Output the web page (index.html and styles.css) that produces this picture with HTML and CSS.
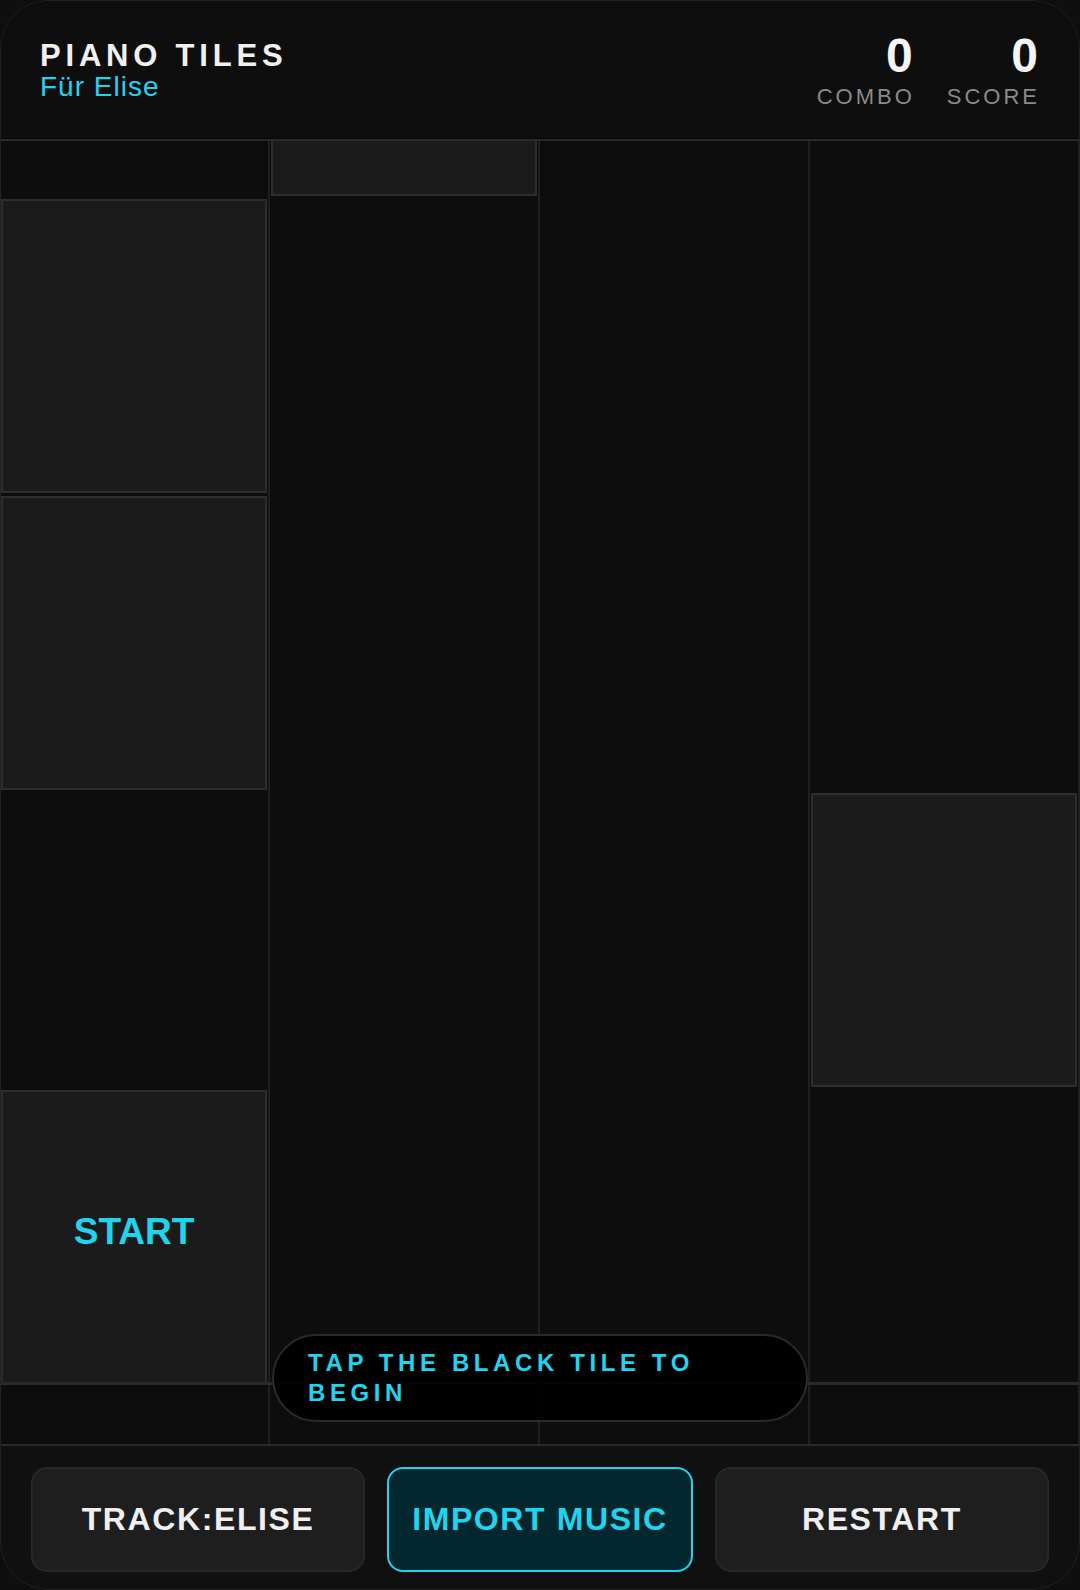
FILE: index.html
```html
<!DOCTYPE html>
<html lang="en">
<head>
<meta charset="utf-8">
<title>Piano Tiles</title>
<link rel="stylesheet" href="styles.css">
</head>
<body>
<div class="app">
  <header class="header">
    <div class="brand">
      <div class="title">PIANO TILES</div>
      <div class="subtitle">Für Elise</div>
    </div>
    <div class="stats">
      <div class="stat">
        <div class="stat-value">0</div>
        <div class="stat-label">COMBO</div>
      </div>
      <div class="stat">
        <div class="stat-value">0</div>
        <div class="stat-label">SCORE</div>
      </div>
    </div>
  </header>

  <main class="board">
    <div class="lane">
      <div class="tile row-3"></div>
      <div class="tile row-2"></div>
      <div class="tile row-0 start-tile"><span class="start-text">START</span></div>
    </div>
    <div class="lane">
      <div class="tile row-4"></div>
    </div>
    <div class="lane"></div>
    <div class="lane">
      <div class="tile row-1"></div>
    </div>
    <div class="hit-line"></div>
    <div class="hint">TAP THE BLACK TILE TO BEGIN</div>
  </main>

  <footer class="controls">
    <button class="btn">TRACK:ELISE</button>
    <button class="btn btn-accent">IMPORT MUSIC</button>
    <button class="btn">RESTART</button>
  </footer>
</div>
</body>
</html>
```

FILE: styles.css
```css
* {
  box-sizing: border-box;
}

html, body {
  margin: 0;
  padding: 0;
  background: #0f0f0f;
}

body {
  font-family: "Liberation Sans", Arial, sans-serif;
}

.app {
  position: relative;
  width: 1080px;
  height: 1590px;
  border-radius: 48px;
  overflow: hidden;
  background: #0e0e0e;
  display: flex;
  flex-direction: column;
}

.app::after {
  content: "";
  position: absolute;
  inset: 0;
  border: 1px solid #222222;
  border-radius: 48px;
  pointer-events: none;
}

/* Header */
.header {
  height: 139px;
  flex: none;
  padding: 2px 40px 0 40px;
  display: flex;
  align-items: center;
  justify-content: space-between;
  background: #0e0e0e;
  border-bottom: 1px solid #080808;
}

.brand {
  display: flex;
  flex-direction: column;
}

.title {
  font-size: 31px;
  line-height: 1;
  font-weight: 700;
  letter-spacing: 4.8px;
  color: #f0f0f0;
}

.subtitle {
  margin-top: 2px;
  font-size: 28px;
  line-height: 1;
  letter-spacing: 1px;
  color: #22d3ee;
}

.stats {
  display: flex;
  gap: 32px;
}

.stat {
  display: flex;
  flex-direction: column;
  align-items: flex-end;
}

.stat-value {
  margin-right: 2px;
  font-size: 48px;
  line-height: 1;
  font-weight: 700;
  color: #f5f5f5;
}

.stat-label {
  margin-top: 6px;
  font-size: 22px;
  line-height: 1;
  letter-spacing: 3px;
  color: #8a8a8a;
}

/* Board */
.board {
  position: relative;
  flex: none;
  height: 1307px;
  display: flex;
  overflow: hidden;
  background: #0d0d0d;
  border-top: 2px solid #2a2a2a;
  border-bottom: 2px solid #2a2a2a;
}

.lane {
  position: relative;
  width: 25%;
  height: 100%;
  border-right: 2px solid #1f1f1f;
}

.lane:last-of-type {
  border-right: none;
}

.tile {
  position: absolute;
  left: 1px;
  right: 1px;
  height: 294px;
  background: #1b1b1b;
  border: 2px solid #2d2d2d;
}

.row-0 { top: 949px; }
.row-1 { top: 652px; }
.row-2 { top: 355px; }
.row-3 { top: 58px; }
.row-4 { top: -239px; }

.start-tile {
  display: flex;
  align-items: center;
  justify-content: center;
  padding-bottom: 10px;
}

.start-text {
  font-size: 37px;
  font-weight: 700;
  color: #22d3ee;
}

.hit-line {
  position: absolute;
  left: 0;
  right: 0;
  top: 1241px;
  height: 3px;
  background: #2a2a2a;
}

.hint {
  position: absolute;
  left: 50%;
  bottom: 22px;
  width: 536px;
  transform: translateX(-50%);
  padding: 12px 34px;
  border: 2px solid #2a2a2a;
  border-radius: 44px;
  background: rgba(0, 0, 0, 0.93);
  color: #22d3ee;
  font-size: 24px;
  line-height: 30px;
  font-weight: 700;
  letter-spacing: 4.6px;
  text-align: left;
}

/* Footer */
.controls {
  flex: 1;
  display: grid;
  grid-template-columns: 1fr auto 1fr;
  gap: 22px;
  padding: 21px 31px 18px 31px;
  background: #101010;
}

.btn {
  margin: 0;
  height: 105px;
  padding: 0 23px;
  border: 2px solid #272727;
  border-radius: 16px;
  background: #1e1e1e;
  color: #efefef;
  font-family: "Liberation Sans", Arial, sans-serif;
  font-size: 32px;
  font-weight: 700;
  letter-spacing: 1.6px;
  text-align: center;
}

.btn-accent {
  background: #03272f;
  border-color: #22d3ee;
  color: #22d3ee;
}
```
